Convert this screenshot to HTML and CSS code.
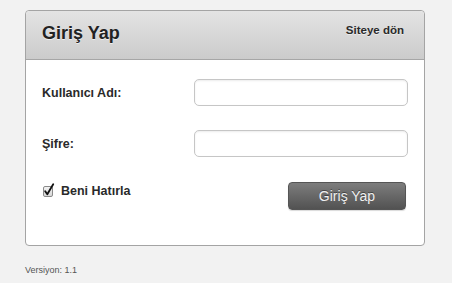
FILE: index.html
```html
<!DOCTYPE html>
<html lang="tr">
<head>
<meta charset="utf-8">
<title>Giriş Yap</title>
<link rel="stylesheet" href="styles.css">
</head>
<body>
<div class="page">
  <div class="panel">
    <div class="panel-head">
      <h1 class="title">Giriş Yap</h1>
      <a class="back" href="#">Siteye dön</a>
    </div>
    <form class="panel-body">
      <label class="lbl">Kullanıcı Adı:</label>
      <input class="field" type="text">
      <label class="lbl">Şifre:</label>
      <input class="field" type="password">
      <label class="remember">
        <svg class="check" width="13" height="15" viewBox="0 0 13 15">
          <defs>
            <linearGradient id="cb" x1="0" y1="0" x2="0" y2="1">
              <stop offset="0" stop-color="#f4f4f4"/>
              <stop offset="1" stop-color="#d6d6d6"/>
            </linearGradient>
          </defs>
          <rect x="0.5" y="3.5" width="9" height="10" rx="1.5" fill="url(#cb)" stroke="#8a8a8a"/>
          <path d="M2.2 8.2 L4.3 11.3 L10.2 1.2" fill="none" stroke="#111" stroke-width="1.8" stroke-linecap="round" stroke-linejoin="round"/>
        </svg>
        <span>Beni Hatırla</span>
      </label>
      <button class="btn" type="button">Giriş Yap</button>
    </form>
  </div>
  <div class="version">Versiyon: 1.1</div>
</div>
</body>
</html>
```
FILE: styles.css
```css
html, body {
  margin: 0;
  padding: 0;
  background: #f2f2f2;
  font-family: "Liberation Sans", Arial, Helvetica, sans-serif;
  color: #2a2a2a;
}
.page {
  padding: 10px 0 0 25px;
}
.panel {
  width: 398px;
  border: 1px solid #a4a4a4;
  border-radius: 4px;
  background: #fff;
}
.panel-head {
  height: 49px;
  box-sizing: border-box;
  display: flex;
  justify-content: space-between;
  align-items: flex-start;
  padding: 12px 20px 0 16px;
  border-bottom: 1px solid #a6a6a6;
  border-radius: 4px 4px 0 0;
  background: linear-gradient(#e3e3e3, #cbcbcb);
}
.title {
  margin: 0;
  font-size: 18px;
  line-height: 20px;
  font-weight: bold;
  color: #222;
  text-shadow: 0 1px 0 rgba(255,255,255,0.6);
}
.back {
  font-size: 11.5px;
  line-height: 14px;
  font-weight: bold;
  color: #2a2a2a;
  text-decoration: none;
  text-shadow: 0 1px 0 rgba(255,255,255,0.5);
}
.panel-body {
  margin: 0;
  display: grid;
  grid-template-columns: 1fr 214px;
  grid-template-rows: 27px 27px 29px;
  row-gap: 24px;
  padding: 19px 16px 35px 16px;
}
.lbl {
  align-self: center;
  font-size: 12.5px;
  font-weight: bold;
  color: #2a2a2a;
}
.field {
  box-sizing: border-box;
  width: 214px;
  height: 27px;
  margin: 0;
  border: 1px solid #c6c6c6;
  border-radius: 5px;
  background: #fff;
  box-shadow: inset 0 1px 2px rgba(0,0,0,0.08);
}
.remember {
  display: flex;
  align-items: flex-start;
  gap: 5px;
  padding-top: 2px;
  padding-left: 1px;
  font-size: 12.5px;
  line-height: 15px;
  font-weight: bold;
  color: #2a2a2a;
}
.remember span {
  padding-top: 1px;
}
.check {
  display: block;
}
.btn {
  align-self: end;
  justify-self: end;
  margin-right: 2px;
  width: 118px;
  height: 28px;
  border: 1px solid #555;
  border-radius: 4px;
  background: linear-gradient(#7d7d7d, #525252);
  color: #f0f0f0;
  font-family: "Liberation Sans", Arial, sans-serif;
  font-size: 14px;
  padding: 0;
  text-shadow: 0 -1px 0 rgba(0,0,0,0.4);
  box-shadow: 0 1px 1px rgba(0,0,0,0.15);
}
.version {
  margin-top: 19px;
  font-size: 9px;
  line-height: 11px;
  color: #555;
}
```
